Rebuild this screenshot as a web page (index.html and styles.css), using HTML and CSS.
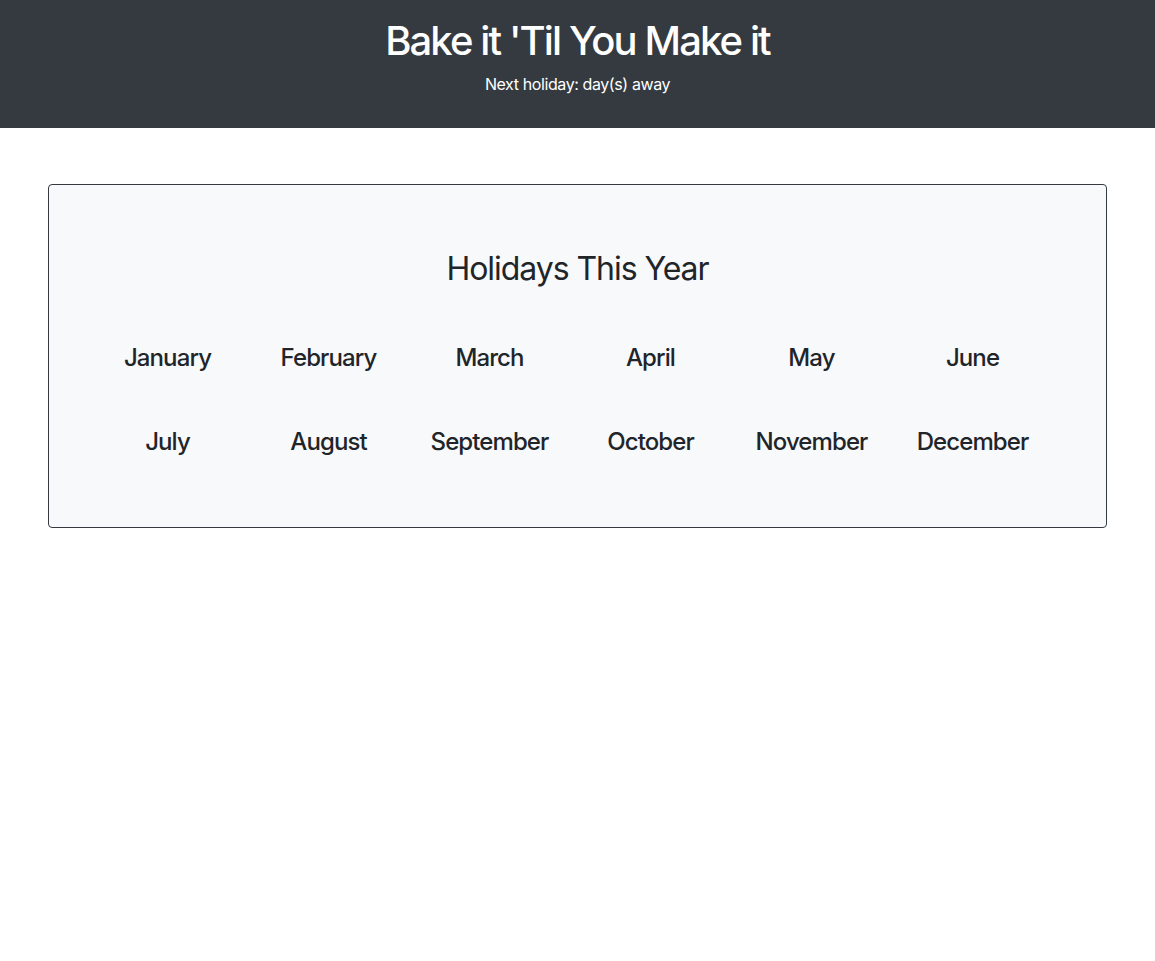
FILE: index.html
```html
<!DOCTYPE html>
<html lang="en">
<head>
<meta charset="utf-8">
<title>Bake it 'Til You Make it</title>
<link rel="stylesheet" href="styles.css">
</head>
<body>
<header class="site-header">
  <h1 class="site-title">Bake it 'Til You Make it</h1>
  <p class="site-sub">Next holiday: day(s) away</p>
</header>
<main class="main">
  <section class="card">
    <h2 class="card-title">Holidays This Year</h2>
    <div class="months">
      <div class="month">January</div>
      <div class="month">February</div>
      <div class="month">March</div>
      <div class="month">April</div>
      <div class="month">May</div>
      <div class="month">June</div>
      <div class="month">July</div>
      <div class="month">August</div>
      <div class="month">September</div>
      <div class="month">October</div>
      <div class="month">November</div>
      <div class="month">December</div>
    </div>
  </section>
</main>
</body>
</html>
```
FILE: styles.css
```css
* { box-sizing: border-box; }
html, body { margin: 0; padding: 0; }
body {
  font-family: Inter, "Liberation Sans", sans-serif;
  color: #212529;
  background: #fff;
}
.site-header {
  background: #343a40;
  color: #fff;
  text-align: center;
  height: 128px;
  padding-top: 17px;
}
.site-title {
  margin: 0 0 7px;
  font-size: 40px;
  line-height: 48px;
  font-weight: 500;
  letter-spacing: -1.9px;
}
.site-sub {
  margin: 0;
  font-size: 16px;
  line-height: 24px;
  letter-spacing: -0.4px;
}
.main {
  padding: 56px 48px 0;
}
.card {
  background: #f8f9fa;
  border: 1px solid #343a40;
  border-radius: 4px;
  padding: 65px 0 70px;
}
.card-title {
  margin: 0 0 55px;
  text-align: center;
  font-size: 32px;
  line-height: 38px;
  font-weight: 400;
  letter-spacing: -1.05px;
}
.months {
  display: grid;
  grid-template-columns: repeat(6, 161px);
  row-gap: 54px;
  padding-left: 38px;
}
.month {
  text-align: center;
  font-size: 24px;
  line-height: 30px;
  font-weight: 500;
  letter-spacing: -0.9px;
}
```
